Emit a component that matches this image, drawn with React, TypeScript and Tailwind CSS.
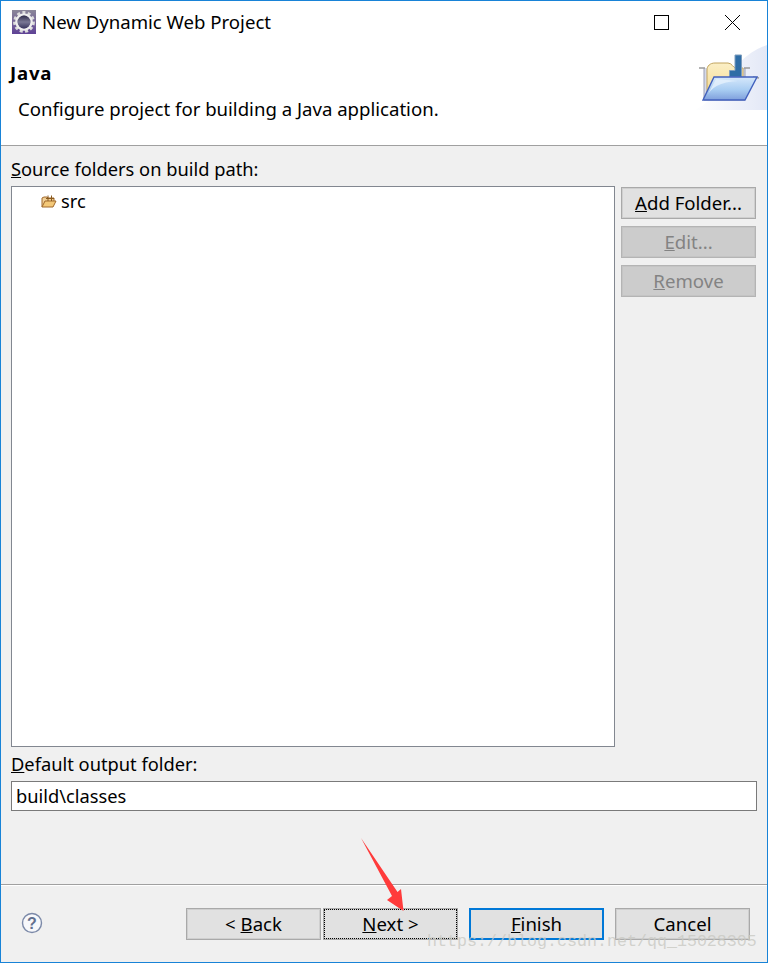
const font = "font-['Noto_Sans','Open_Sans',sans-serif]";

function EclipseIcon() {
  return (
    <svg width="24" height="24" viewBox="0 0 24 24" className="shrink-0">
      <defs>
        <linearGradient id="tile" x1="0" y1="0" x2="0" y2="1">
          <stop offset="0" stopColor="#8b8799" />
          <stop offset="1" stopColor="#5f4296" />
        </linearGradient>
        <linearGradient id="core" x1="0" y1="0" x2="0" y2="1">
          <stop offset="0" stopColor="#2f2d4a" />
          <stop offset="0.5" stopColor="#7a7896" />
          <stop offset="1" stopColor="#38355e" />
        </linearGradient>
      </defs>
      <rect width="24" height="24" fill="url(#tile)" />
      <circle cx="12" cy="12" r="9.4" fill="none" stroke="#dcdcdc" strokeWidth="3" strokeDasharray="3 2.3" />
      <circle cx="12" cy="12" r="7.6" fill="none" stroke="#eeeeee" strokeWidth="2.4" />
      <circle cx="12" cy="12" r="6.4" fill="url(#core)" />
    </svg>
  );
}

function WizardBanner() {
  return (
    <svg width="73" height="67" viewBox="0 0 73 67" className="shrink-0">
      <defs>
        <linearGradient id="glow" x1="0" y1="0.5" x2="1" y2="0.5">
          <stop offset="0" stopColor="#ffffff" />
          <stop offset="1" stopColor="#e3e8f6" />
        </linearGradient>
        <linearGradient id="back" x1="0" y1="0" x2="0" y2="1">
          <stop offset="0" stopColor="#fbefc6" />
          <stop offset="1" stopColor="#f5d98c" />
        </linearGradient>
        <linearGradient id="front" x1="0" y1="0" x2="0" y2="1">
          <stop offset="0" stopColor="#d6e8fb" />
          <stop offset="0.55" stopColor="#a9cdf2" />
          <stop offset="1" stopColor="#7f9fdc" />
        </linearGradient>
      </defs>
      <path d="M0 66 C26 58 34 14 73 1 L73 66 Z" fill="url(#glow)" />
      <path d="M10 24 L10 56 L51 56 L51 24" fill="#d5d9ea" stroke="#9a9fb4" strokeWidth="1" />
      <path d="M13 54 L13 26 C13 22 16 19 21 19 L34 19 C38 19 39 24 42 24 L49 24 L49 54 Z" fill="url(#back)" stroke="#c2a45e" strokeWidth="1" />
      <path d="M35.5 26.5 L41 26.5 L41 11 L47.5 11 L47.5 33 L35.5 33 Z" fill="#2f6da6" stroke="#7d9dbd" strokeWidth="1" />
      <path d="M5 24 L11 24 M50 24 L56 24 M59 33 L65 34" fill="none" stroke="#9b9b9b" strokeWidth="1.6" />
      <path d="M20 33 L63 33 L51 56 L9 56 Z" fill="url(#front)" stroke="#4160bd" strokeWidth="1.4" />
      <path d="M12 54 C17 43 26 38 44 37 L22 35 Z" fill="#e6f1fc" opacity="0.8" />
    </svg>
  );
}

function SrcIcon() {
  return (
    <svg width="16" height="14" viewBox="0 0 16 14" className="shrink-0">
      <path d="M1 12 L1 3 L3 2 L6 2 L7 3 L13 3 L13 6" fill="#f0cf96" stroke="#a0682a" strokeWidth="1" />
      <path d="M1 12 L4 6 L15 6 L12 12 Z" fill="#f3c878" stroke="#a0682a" strokeWidth="1" />
      <path d="M7 0.5 L7 6 M10.5 0.5 L10.5 6 M5 3.5 L13 3.5" stroke="#8a5a1e" strokeWidth="1" fill="none" />
    </svg>
  );
}

function WinButton({ children, disabled, focused, dotted }: { children: React.ReactNode; disabled?: boolean; focused?: boolean; dotted?: boolean }) {
  return (
    <button
      className={`relative h-8 w-[135px] flex items-center justify-center text-[18.6px] leading-none ${
        focused
          ? "border-2 border-[#0078d7] bg-[#e1e1e1]"
          : disabled
            ? "border border-[#b4b4b4] shadow-[inset_0_0_0_1px_#c4c4c4] bg-[#cccccc] text-[#838383]"
            : "border border-[#a9a9a9] shadow-[inset_0_0_0_1px_#cfcfcf] bg-[#e1e1e1] text-black"
      }`}
    >
      {dotted && <span className="absolute inset-0 border border-dotted border-black" />}
      {children}
    </button>
  );
}

export default function App() {
  return (
    <div className={`relative w-[768px] h-[963px] overflow-hidden border border-[#1883d7] bg-[#f0f0f0] text-[18.3px] leading-[18px] text-black flex flex-col ${font}`}>
      <div className="bg-white h-[145px] border-b border-[#a0a0a0] flex flex-col shrink-0 text-[18.6px]">
        <div className="h-[44px] flex items-center pl-[11px] pb-[2px] shrink-0">
          <EclipseIcon />
          <span className="ml-[6px]">New Dynamic Web Project</span>
          <div className="ml-auto flex items-center">
            <span className="w-[15px] h-[15px] border-[1.5px] border-black mr-[56px]" />
            <svg width="15" height="15" viewBox="0 0 15 15" className="mr-[27px]">
              <path d="M0 0 L15 15 M15 0 L0 15" stroke="black" strokeWidth="1" />
            </svg>
          </div>
        </div>
        <div className="flex justify-between">
          <div className="pl-[9px]">
            <div className="font-bold tracking-[0.8px] mt-[19px]">Java</div>
            <div className="pl-[8px] mt-[18px]">Configure project for building a Java application.</div>
          </div>
          <div className="-mt-[1px]">
            <WizardBanner />
          </div>
        </div>
      </div>

      <div className="flex-1 flex flex-col px-[10px]">
        <div className="mt-[14px]"><u>S</u>ource folders on build path:</div>
        <div className="flex mt-[8px] gap-[6px]">
          <div className="w-[604px] h-[561px] bg-white border border-[#828790] pt-[6px] pl-[29px]">
            <div className="flex items-center gap-[4px]">
              <SrcIcon />
              <span className="-mt-[1px]">src</span>
            </div>
          </div>
          <div className="flex flex-col gap-[7px] pt-[1px]">
            <WinButton><span><u>A</u>dd Folder...</span></WinButton>
            <WinButton disabled><span><u>E</u>dit...</span></WinButton>
            <WinButton disabled><span><u>R</u>emove</span></WinButton>
          </div>
        </div>
        <div className="mt-[8px]"><u>D</u>efault output folder:</div>
        <div className="mt-[8px] w-[746px] h-[30px] bg-white border border-[#7a7a7a] pl-[4px] flex items-center">
          build\classes
        </div>
      </div>

      <div className="h-[78px] border-t border-[#a0a0a0] shrink-0 shadow-[inset_0_1px_0_#ffffff] flex items-start pt-[23px] pl-[20px] pr-[17px]">
        <svg width="22" height="22" viewBox="0 0 22 22" className="mt-[4px]">
          <circle cx="11" cy="11" r="9.5" fill="#f7f8fb" stroke="#7b89a8" strokeWidth="1.4" />
          <text x="11" y="16.5" textAnchor="middle" fontSize="16" fontWeight="700" fill="#62708f" fontFamily="Liberation Sans">?</text>
        </svg>
        <div className="ml-auto flex">
          <WinButton><span>&lt; <u>B</u>ack</span></WinButton>
          <div className="ml-[2px]"><WinButton dotted><span><u>N</u>ext &gt;</span></WinButton></div>
          <div className="ml-[11px]"><WinButton focused><span><u>F</u>inish</span></WinButton></div>
          <div className="ml-[11px]"><WinButton><span>Cancel</span></WinButton></div>
        </div>
      </div>

      <svg width="46" height="78" viewBox="0 0 46 78" className="absolute left-[359px] top-[836px]">
        <path d="M1 1 L37.5 55 L41 52 L43.5 74 L27 63 L32 59 Z" fill="#ff3b3b" />
      </svg>
      <div className="absolute left-[426px] top-[933px] font-['Liberation_Mono',monospace] text-[16.67px] leading-none text-[#c9c9c3]/80">
        https://blog.csdn.net/qq_15028305
      </div>
    </div>
  );
}
